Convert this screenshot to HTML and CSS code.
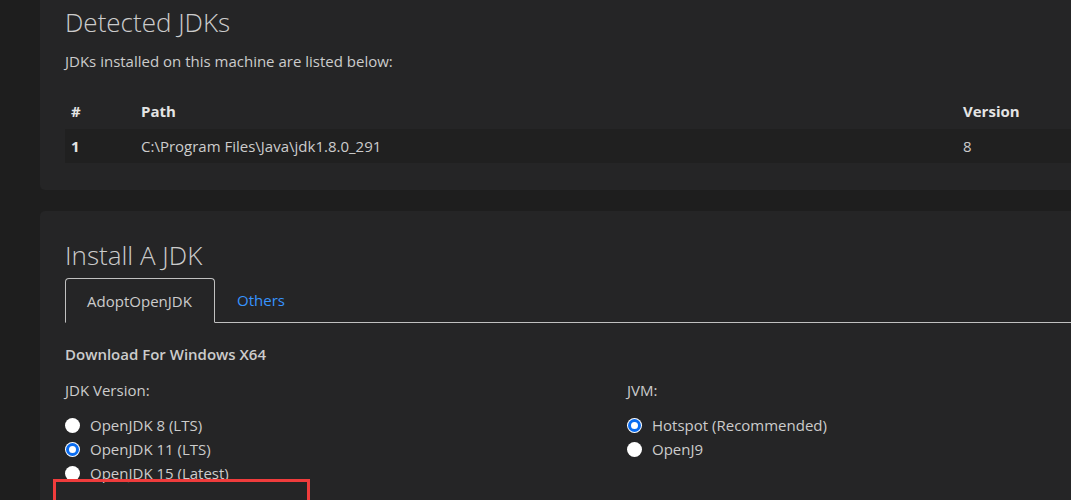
FILE: index.html
```html
<!DOCTYPE html>
<html>
<head>
<meta charset="utf-8">
<link rel="stylesheet" href="styles.css">
</head>
<body>
<div class="page">
  <section class="card card-top">
    <h1 class="title">Detected JDKs</h1>
    <p class="desc">JDKs installed on this machine are listed below:</p>
    <table class="jdk-table">
      <thead>
        <tr><th class="c-num">#</th><th class="c-path">Path</th><th class="c-ver">Version</th></tr>
      </thead>
      <tbody>
        <tr class="row-alt"><td class="c-num strong">1</td><td class="c-path">C:\Program Files\Java\jdk1.8.0_291</td><td class="c-ver">8</td></tr>
      </tbody>
    </table>
  </section>

  <section class="card card-install">
    <h1 class="title">Install A JDK</h1>
    <div class="tabs">
      <div class="tab active">AdoptOpenJDK</div>
      <div class="tab link">Others</div>
      <div class="tab-rest"></div>
    </div>
    <h2 class="subhead">Download For Windows X64</h2>
    <div class="cols">
      <div class="col">
        <div class="label">JDK Version:</div>
        <label class="opt"><input type="radio" name="ver"><span>OpenJDK 8 (LTS)</span></label>
        <label class="opt"><input type="radio" name="ver" checked><span>OpenJDK 11 (LTS)</span></label>
        <label class="opt"><input type="radio" name="ver"><span>OpenJDK 15 (Latest)</span></label>
      </div>
      <div class="col">
        <div class="label">JVM:</div>
        <label class="opt"><input type="radio" name="jvm" checked><span>Hotspot (Recommended)</span></label>
        <label class="opt"><input type="radio" name="jvm"><span>OpenJ9</span></label>
      </div>
    </div>
    <div class="highlight-box"></div>
  </section>
</div>
</body>
</html>
```

FILE: styles.css
```css
html, body {
  margin: 0;
  padding: 0;
  background: #1e1e1e;
  overflow: hidden;
  width: 1071px;
  height: 500px;
}
body {
  font-family: "Open Sans", "Noto Sans", sans-serif;
  color: #cccccc;
  font-size: 15px;
}
.page {
  padding-left: 40px;
  width: 1031px;
  height: 500px;
  overflow: hidden;
  display: flex;
  flex-direction: column;
  gap: 21px;
}
.card {
  background: #252526;
  border-radius: 5px 0 0 5px;
  padding: 0 0 0 25px;
  position: relative;
  flex: none;
}
.card-top {
  border-radius: 0 0 0 5px;
  padding-top: 4px;
  padding-bottom: 27px;
}
.title {
  margin: 0;
  font-weight: 300;
  font-size: 26px;
  line-height: 36px;
  color: #cccccc;
}
.desc {
  margin: 11px 0 0;
  line-height: 20px;
}
.jdk-table {
  margin-top: 22px;
  width: 1006px;
  border-collapse: collapse;
}
.jdk-table th, .jdk-table td {
  text-align: left;
  padding: 0 6px;
  height: 34px;
  white-space: nowrap;
}
.jdk-table th {
  font-weight: 700;
  color: #e4e4e4;
  height: 36px;
}
.c-num { width: 58px; }
.c-path { width: 810px; }
.strong { font-weight: 700; color: #e4e4e4; }
.row-alt { background: #202020; }
.card-install {
  padding-top: 26px;
  height: 400px;
}
.tabs {
  display: flex;
  margin-top: 5px;
  height: 45px;
}
.tab {
  padding: 0 22px;
  display: flex;
  align-items: center;
  border-bottom: 1px solid #c0c0c0;
}
.tab.active {
  border: 1px solid #c0c0c0;
  border-bottom: 1px solid transparent;
  border-radius: 4px 4px 0 0;
  padding: 0 21px 0 20px;
  width: 150px;
  box-sizing: border-box;
  justify-content: center;
  color: #cccccc;
}
.tab.link {
  color: #3794ff;
}
.tab-rest {
  flex: 1;
  border-bottom: 1px solid #c0c0c0;
}
.subhead {
  margin: 21px 0 0;
  font-size: 15px;
  font-weight: 600;
  line-height: 20px;
  color: #cccccc;
}
.cols {
  display: grid;
  grid-template-columns: 562px 1fr;
  margin-top: 16px;
}
.label {
  line-height: 20px;
  margin-bottom: 13px;
}
.opt {
  display: flex;
  align-items: center;
  height: 24px;
  gap: 10px;
}
.opt input {
  appearance: none;
  -webkit-appearance: none;
  margin: 0;
  width: 15px;
  height: 15px;
  border-radius: 50%;
  background: #ffffff;
  flex: none;
}
.opt input:checked {
  border: 3px solid #0a6cf0;
  box-shadow: 0 0 0 1px #ffffff;
  width: 13px;
  height: 13px;
  box-sizing: border-box;
  margin: 0 1px;
}
.opt span {
  line-height: 20px;
}
.highlight-box {
  position: absolute;
  left: 13px;
  top: 268px;
  width: 251px;
  height: 60px;
  border: 3px solid #f03c3c;
}
```
